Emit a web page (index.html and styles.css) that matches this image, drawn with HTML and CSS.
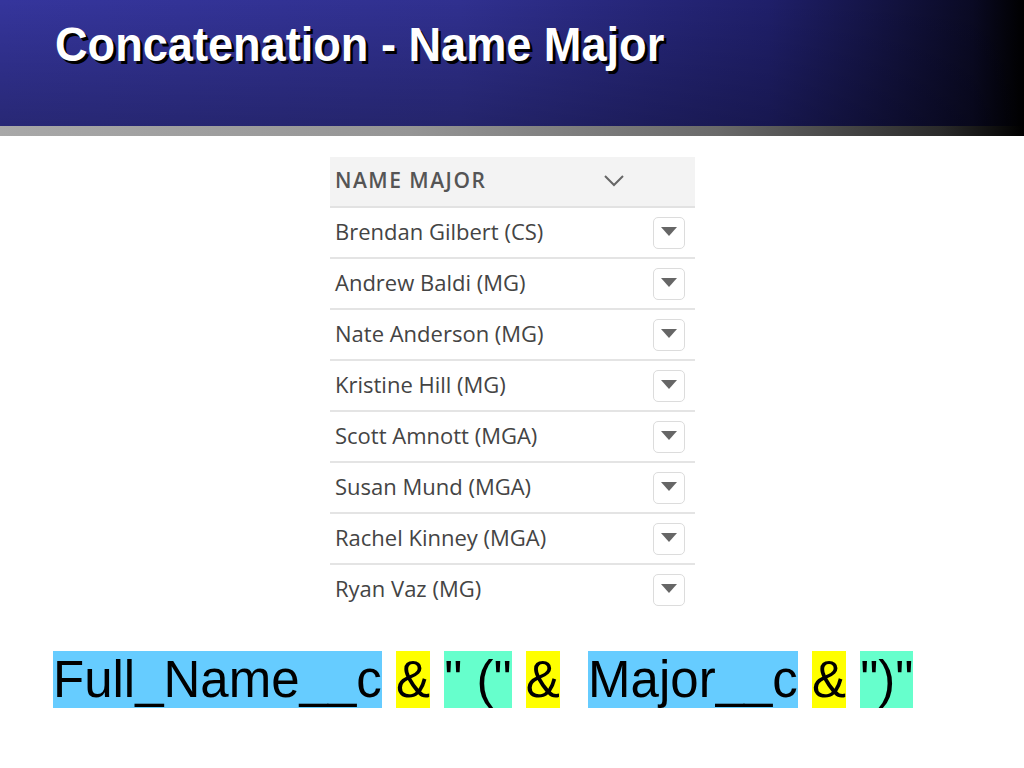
FILE: index.html
```html
<!DOCTYPE html>
<html lang="en">
<head>
    <meta charset="UTF-8">
    <title>Concatenation - Name Major</title>
    <link rel="stylesheet" href="styles.css">
</head>
<body>

<div class="header">
    <h1 class="title">Concatenation - Name Major</h1>
</div>
<div class="header_bar"></div>

<div class="table_wrap">
    <table class="tab">
        <thead>
            <tr>
                <th>
                    <div class="th_inner">
                        <span>NAME MAJOR</span>
                        <svg class="chev" width="22" height="14" viewBox="0 0 22 14">
                            <path d="M2 2 L11 11 L20 2" fill="none" stroke="#666" stroke-width="2"/>
                        </svg>
                    </div>
                </th>
            </tr>
        </thead>
        <tbody>
            <tr><td><div class="cell"><span>Brendan Gilbert (CS)</span><button class="menu"><span class="tri"></span></button></div></td></tr>
            <tr><td><div class="cell"><span>Andrew Baldi (MG)</span><button class="menu"><span class="tri"></span></button></div></td></tr>
            <tr><td><div class="cell"><span>Nate Anderson (MG)</span><button class="menu"><span class="tri"></span></button></div></td></tr>
            <tr><td><div class="cell"><span>Kristine Hill (MG)</span><button class="menu"><span class="tri"></span></button></div></td></tr>
            <tr><td><div class="cell"><span>Scott Amnott (MGA)</span><button class="menu"><span class="tri"></span></button></div></td></tr>
            <tr><td><div class="cell"><span>Susan Mund (MGA)</span><button class="menu"><span class="tri"></span></button></div></td></tr>
            <tr><td><div class="cell"><span>Rachel Kinney (MGA)</span><button class="menu"><span class="tri"></span></button></div></td></tr>
            <tr class="last"><td><div class="cell"><span>Ryan Vaz (MG)</span><button class="menu"><span class="tri"></span></button></div></td></tr>
        </tbody>
    </table>
</div>

<div class="formula"><span class="field">Full_Name__c</span> <span class="op">&amp;</span> <span class="str">" ("</span> <span class="op">&amp;</span>&nbsp; <span class="field">Major__c</span> <span class="op">&amp;</span> <span class="str">")"</span></div>

</body>
</html>
```

FILE: styles.css
```css
body {
    margin: 0;
    background: #fff;
    font-family: "Liberation Sans", Arial, sans-serif;
}
.header {
    height: 126px;
    background:
        linear-gradient(to bottom, rgba(0, 0, 0, 0) 0%, rgba(0, 0, 0, 0.25) 100%),
        linear-gradient(to right, #35359c 0%, #30308f 45%, #1f1f6a 75%, #0a0a24 95%, #000 100%);
    padding: 0 0 0 55px;
    box-sizing: border-box;
}
.title {
    margin: 0;
    padding-top: 17px;
    font-family: "Liberation Sans Narrow", "Liberation Sans", Arial, sans-serif;
    font-size: 48px;
    font-weight: bold;
    line-height: 56px;
    color: #fff;
    text-shadow: 3px 3px 0 #000;
    transform: scaleX(0.94);
    transform-origin: left center;
    white-space: nowrap;
}
.header_bar {
    height: 10px;
    background: linear-gradient(to right, #a8a8a8 0%, #959595 40%, #6a6a6a 70%, #2a2a2a 92%, #000 100%);
}
.table_wrap {
    padding-top: 21px;
    padding-left: 330px;
}
.tab {
    width: 365px;
    border-collapse: collapse;
    font-family: "Open Sans", "Noto Sans", sans-serif;
}
.tab th {
    background: #f3f3f3;
    height: 49px;
    padding: 0;
    border-bottom: 2px solid #e2e2e2;
    text-align: left;
}
.th_inner {
    display: flex;
    align-items: center;
    justify-content: space-between;
    padding: 0 70px 0 5px;
    font-size: 21px;
    font-weight: 600;
    letter-spacing: 1.5px;
    color: #555;
    margin-top: -4px;
}
.chev {
    margin-top: 2px;
}
.tab td {
    height: 49px;
    padding: 0;
    border-bottom: 2px solid #e4e4e4;
}
.tab .last td {
    border-bottom: none;
}
.cell {
    display: flex;
    align-items: center;
    justify-content: space-between;
    padding: 0 10px 0 5px;
    font-size: 22px;
    color: #444;
}
.cell span {
    margin-top: -3px;
}
.menu {
    width: 32px;
    height: 32px;
    border: 1px solid #dcdcdc;
    border-radius: 5px;
    background: #fff;
    padding: 0;
    display: flex;
    align-items: center;
    justify-content: center;
}
.tri {
    width: 0;
    height: 0;
    border-left: 8px solid transparent;
    border-right: 8px solid transparent;
    border-top: 9px solid #666;
    margin-top: 2px;
}
.formula {
    margin-top: 37px;
    padding-left: 53px;
    font-size: 51px;
    line-height: 58px;
    color: #000;
}
.field { background: #66ccff; }
.op { background: #ffff00; }
.str { background: #66ffcc; }
```
